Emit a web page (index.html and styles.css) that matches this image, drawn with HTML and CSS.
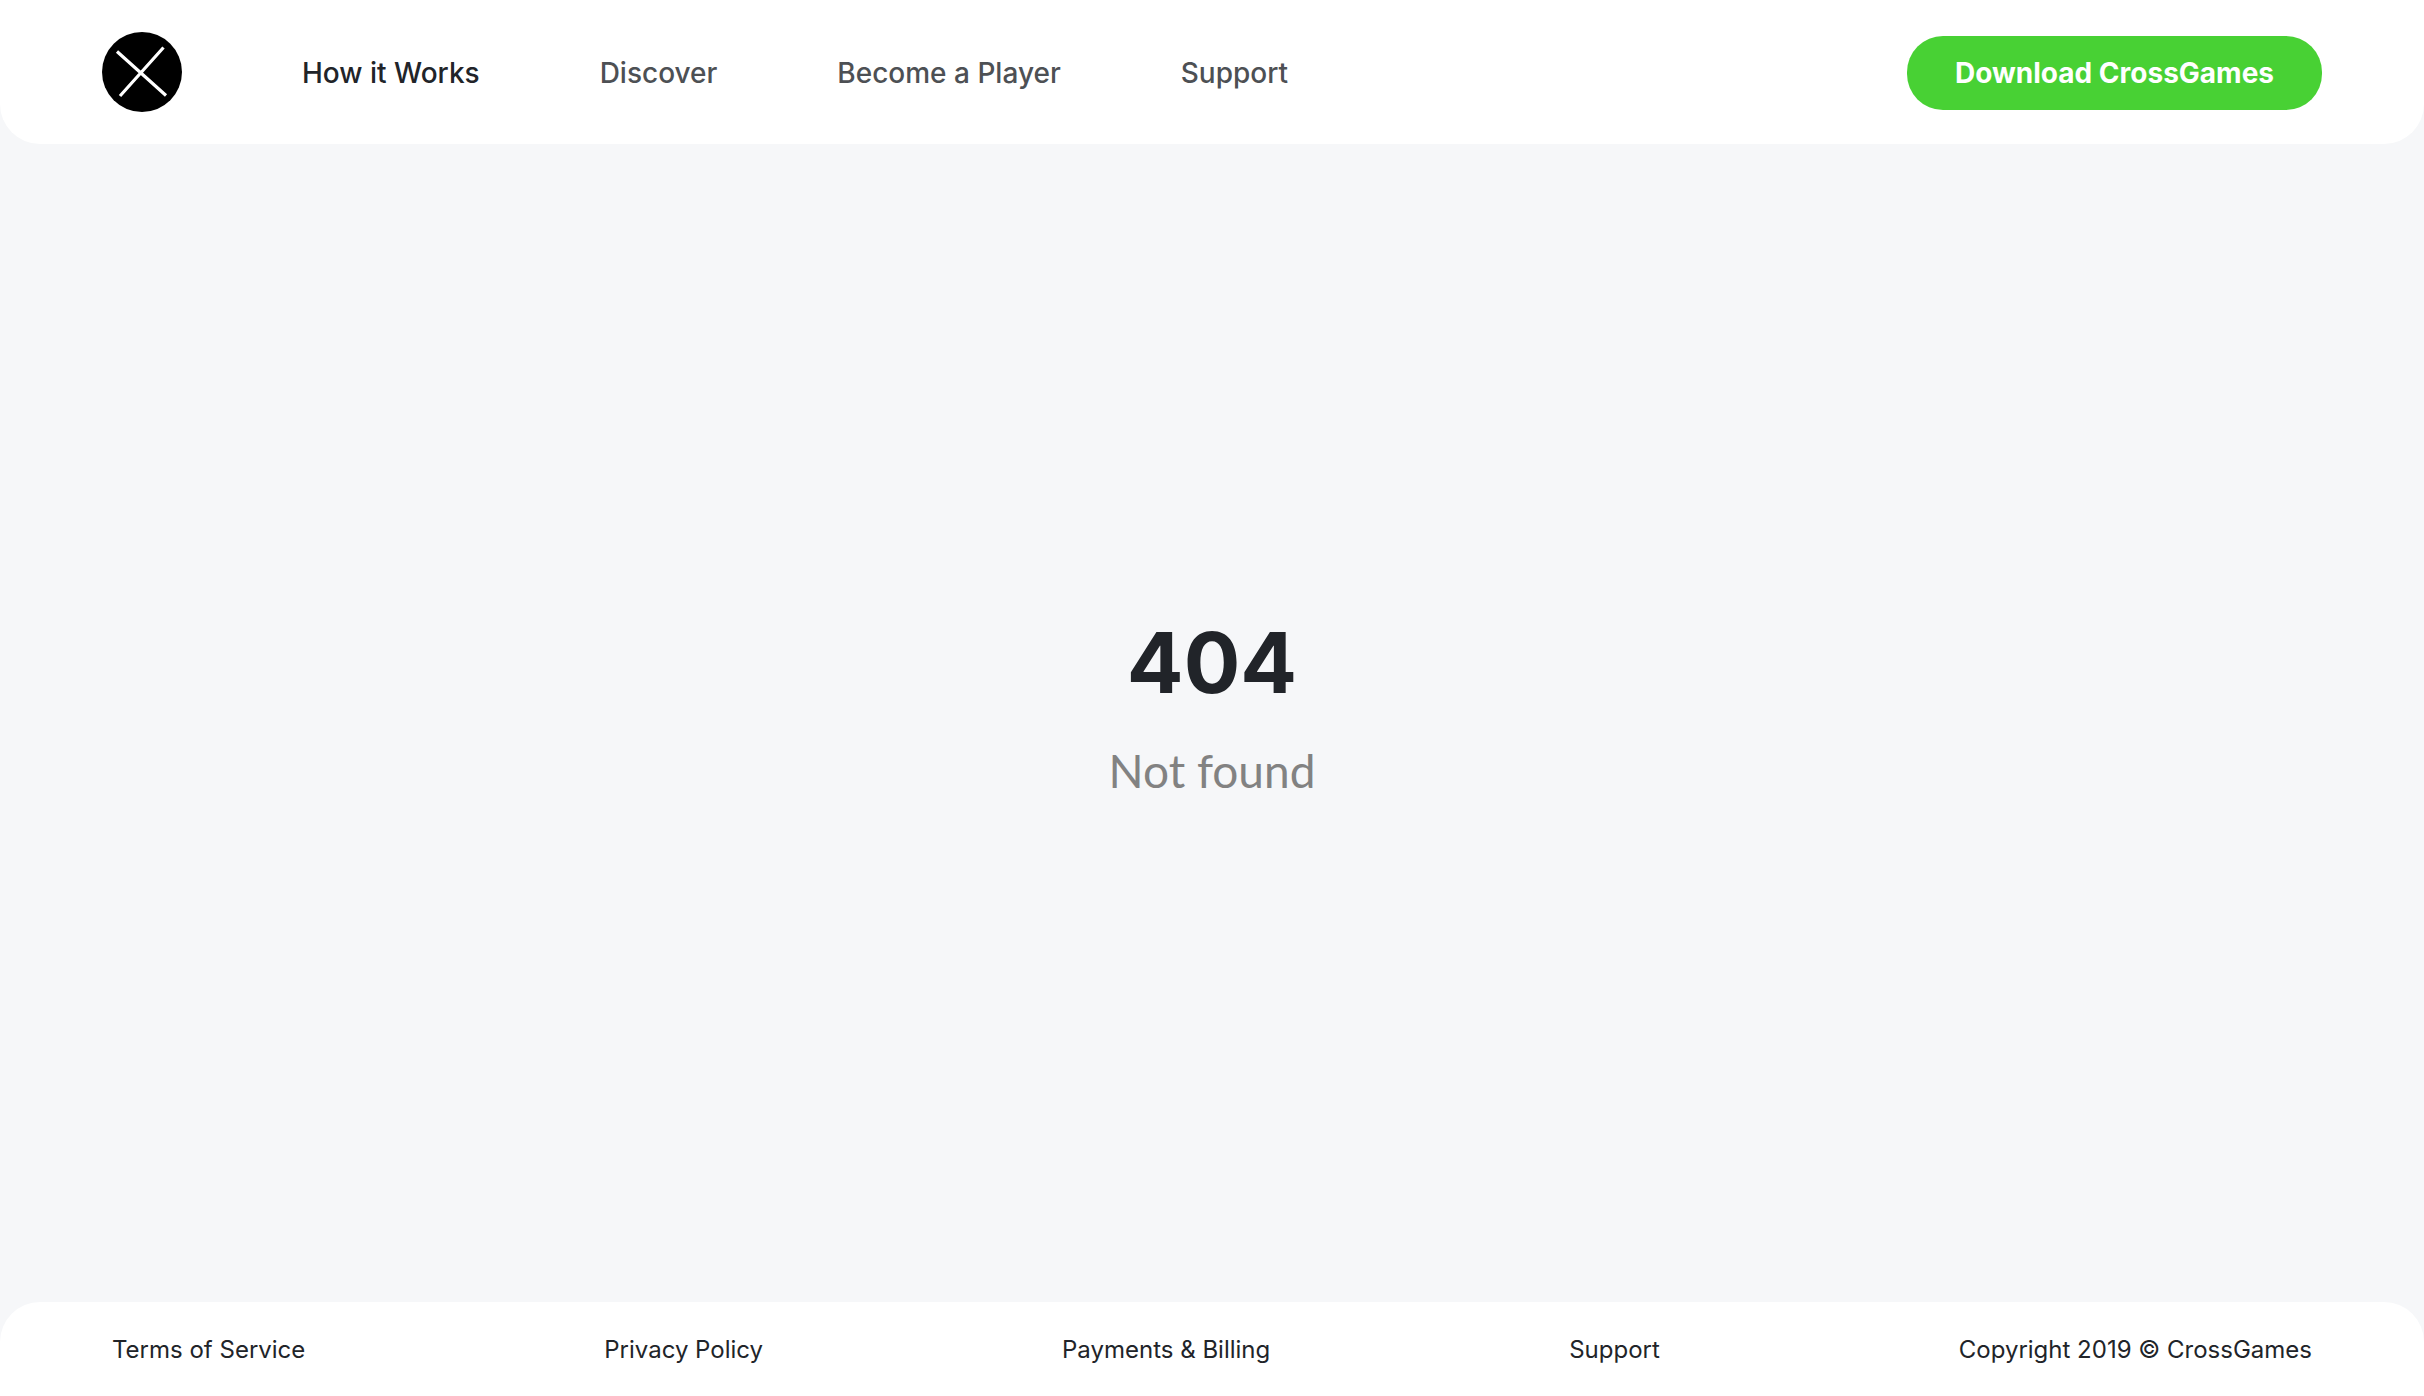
FILE: index.html
```html
<!DOCTYPE html>
<html lang="en">
<head>
  <meta charset="utf-8">
  <meta name="viewport" content="width=device-width, initial-scale=1">
  <title>Not found – CrossGames</title>
  <link rel="stylesheet" href="styles.css">
</head>
<body class="page">
  <header class="header">
    <a class="logo" href="#" aria-label="CrossGames">
      <svg class="logo-mark" viewBox="0 0 80 80" aria-hidden="true">
        <circle cx="40" cy="40" r="40"/>
        <path d="M15 19.5L64 63.5M61.5 15.5L18 64" fill="none" stroke="#fff" stroke-width="3.2"/>
      </svg>
    </a>
    <nav class="nav" aria-label="Main">
      <a class="nav-link nav-link-active" href="#">How it Works</a>
      <a class="nav-link" href="#">Discover</a>
      <a class="nav-link" href="#">Become a Player</a>
      <a class="nav-link" href="#">Support</a>
    </nav>
    <button class="download" type="button">Download CrossGames</button>
  </header>
  <main class="message">
    <h1 class="message-code">404</h1>
    <p class="message-text">Not found</p>
  </main>
  <footer class="footer">
    <a class="footer-link" href="#">Terms of Service</a>
    <a class="footer-link" href="#">Privacy Policy</a>
    <a class="footer-link" href="#">Payments &amp; Billing</a>
    <a class="footer-link" href="#">Support</a>
    <span>Copyright 2019 © CrossGames</span>
  </footer>
</body>
</html>
```

FILE: styles.css
```css
* {
  box-sizing: border-box;
}

.page {
  display: flex;
  flex-direction: column;
  min-height: 100vh;
  margin: 0;
  background: #f6f7f9;
  color: #212429;
  font-family: Inter, sans-serif;
}

.header {
  display: flex;
  align-items: center;
  padding: 32px 102px;
  border-radius: 0 0 40px 40px;
  background: #fff;
}

.logo,
.logo-mark {
  display: block;
  width: 80px;
  height: 80px;
}

.nav {
  display: flex;
  gap: 120px;
  margin: 2px 0 0 120px;
}

.nav-link {
  color: #4d5054;
  font-size: 28px;
  font-weight: 500;
  line-height: 36px;
  text-decoration: none;
}

.nav-link-active {
  color: #212429;
}

.download {
  margin: 2px 0 0 auto;
  padding: 19px 48px;
  border: 0;
  border-radius: 36px;
  background: #48d134;
  color: #fff;
  font-family: inherit;
  font-size: 28px;
  font-weight: 700;
  line-height: 36px;
}

.message {
  display: flex;
  flex: 1;
  flex-direction: column;
  align-items: center;
  justify-content: center;
  text-align: center;
}

.message-code {
  margin: 0;
  font-size: 84px;
  font-weight: 700;
  line-height: 104px;
}

.message-text {
  margin: 24px 0 32px;
  color: #828282;
  font-family: Lato, sans-serif;
  font-size: 46px;
  line-height: 64px;
}

.footer {
  display: flex;
  align-items: flex-start;
  justify-content: space-between;
  padding: 32px 112px 30px;
  border-radius: 40px 40px 0 0;
  background: #fff;
  font-size: 24px;
  line-height: 32px;
}

.footer-link {
  color: inherit;
  text-decoration: none;
}
```
